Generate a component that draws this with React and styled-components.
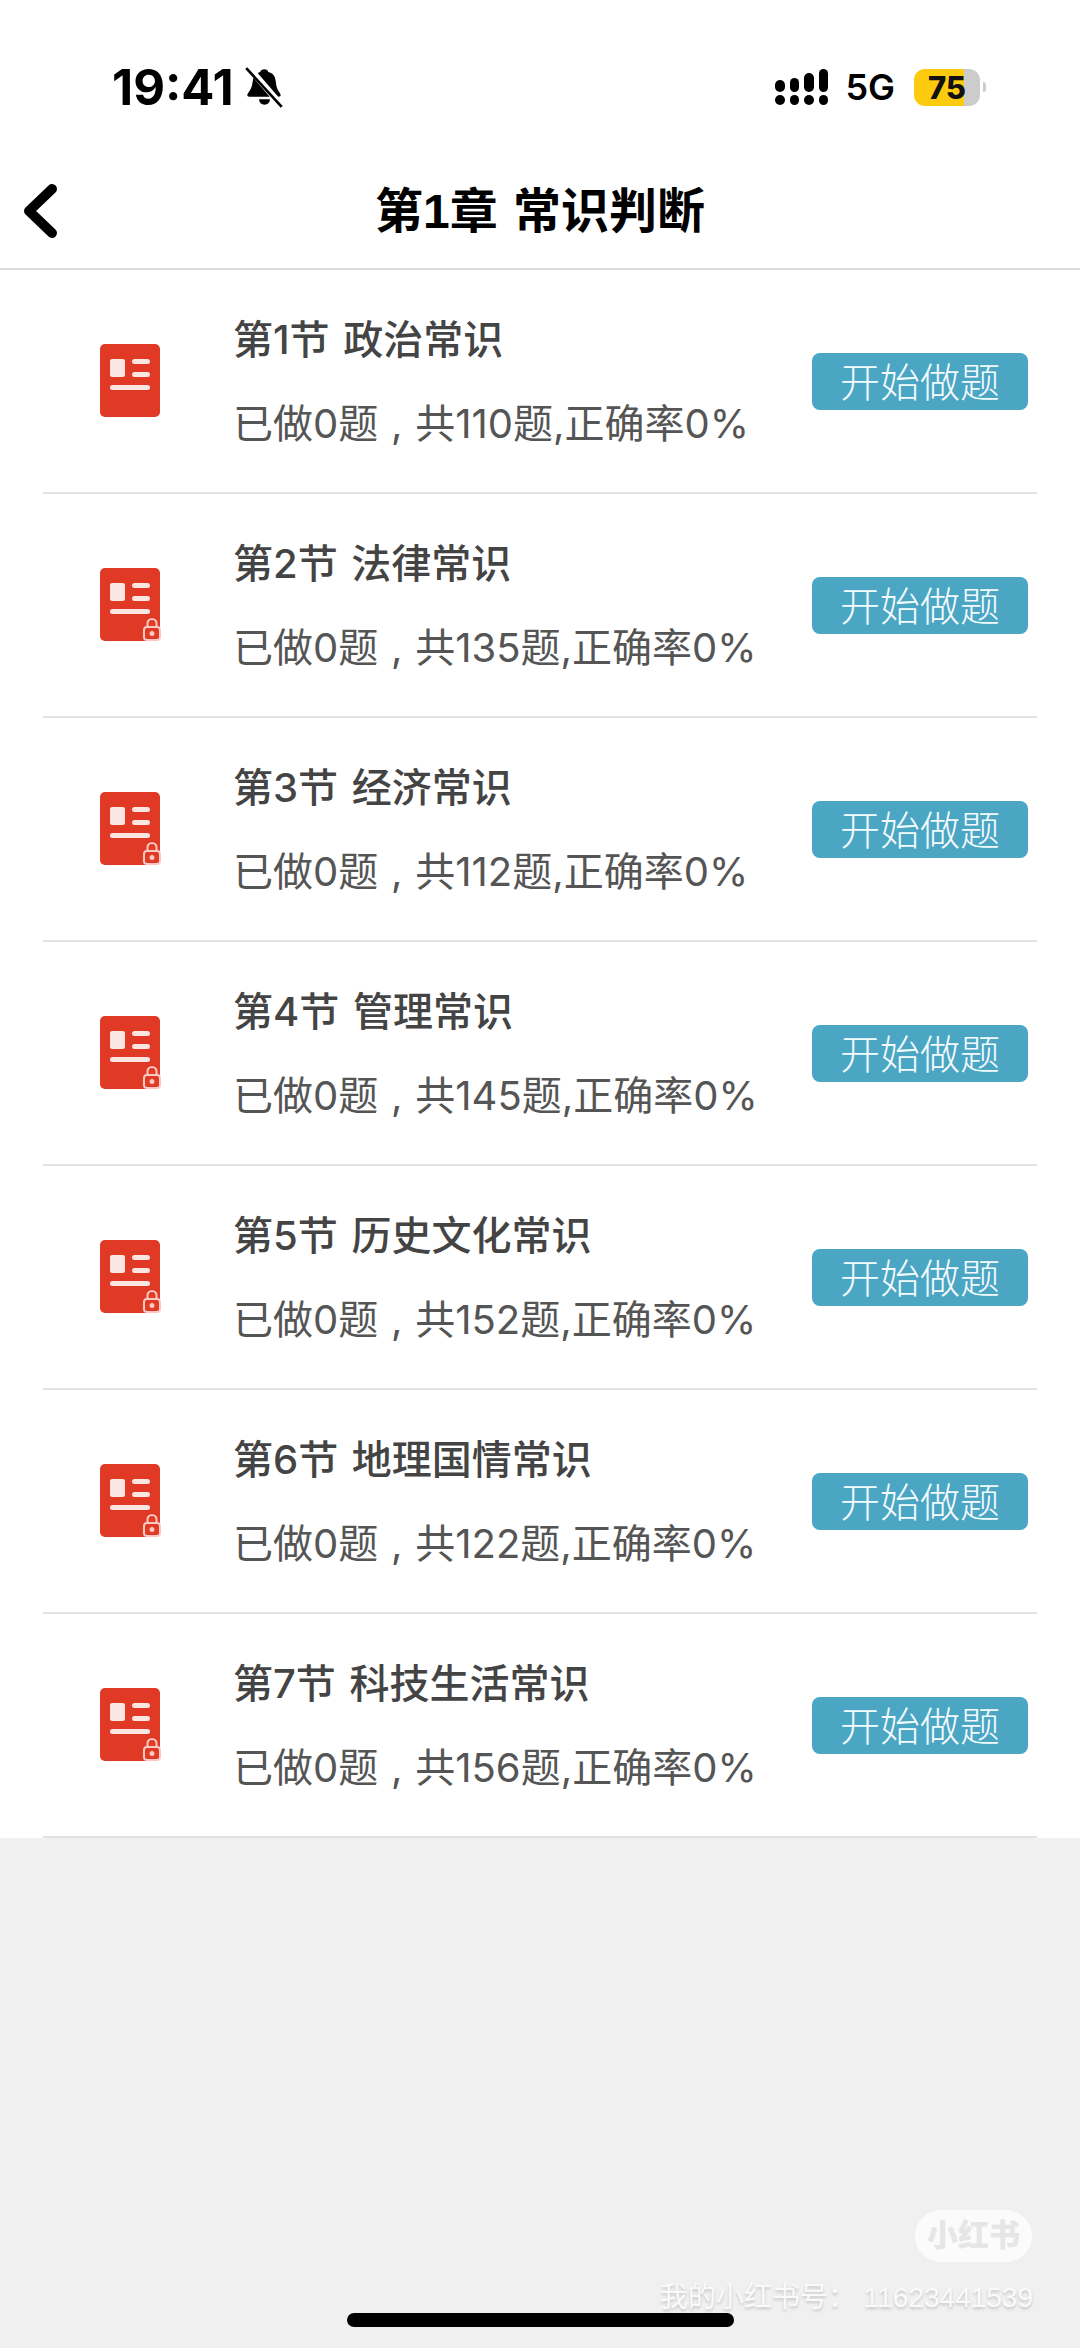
import React from 'react';
import styled, { createGlobalStyle } from 'styled-components';

const sections = [
    { title: '第1节 政治常识', total: 110, locked: false },
    { title: '第2节 法律常识', total: 135, locked: true },
    { title: '第3节 经济常识', total: 112, locked: true },
    { title: '第4节 管理常识', total: 145, locked: true },
    { title: '第5节 历史文化常识', total: 152, locked: true },
    { title: '第6节 地理国情常识', total: 122, locked: true },
    { title: '第7节 科技生活常识', total: 156, locked: true },
];

const signal = [12, 14, 19, 23];

const SectionIcon = ({ locked }) => (
    <IconSvg viewBox="0 0 62 76">
        <rect x="0" y="1" width="60" height="73" rx="5" fill="#e03a27" />
        <rect x="10" y="16" width="15" height="18" rx="2" fill="#fce6e2" />
        <rect x="32" y="16" width="18" height="5" rx="2.5" fill="#fce6e2" />
        <rect x="32" y="29" width="18" height="5" rx="2.5" fill="#fce6e2" />
        <rect x="10" y="42" width="40" height="5" rx="2.5" fill="#fce6e2" />
        {locked && (
            <g fill="none" stroke="#f8c9c0" strokeWidth="2">
                <rect x="44" y="60" width="16" height="13" rx="3" fill="#e03a27" />
                <path d="M47.5 60v-3.500a4.500 4.500 0 0 1 9 0V60" />
                <circle cx="52" cy="66.500" r="1.500" fill="#f8c9c0" />
            </g>
        )}
    </IconSvg>
);

export default function App() {
    return (
        <Page>
            <GlobalStyle />
            <StatusBar>
                <StatusLeft>
                    <Clock>19:41</Clock>
                    <svg width="39" height="43" viewBox="0 0 36 40">
                        <path d="M18 3c2 0 3 1 3.500 2.500 4.500 1 6.500 4 7 9 .4 5 1.500 8 4 11 1 1.500.5 3-1.500 3H4c-2 0-2.500-1.500-1.500-3 2.500-3 4-6 4.500-11 .5-5 3-8 7-9C14.500 4 16 3 18 3z" fill="#000" />
                        <path d="M13 31h10c0 3-2 5-5 5s-5-2-5-5z" fill="#000" />
                        <path d="M3 1l31 36" stroke="#fff" strokeWidth="6" />
                        <path d="M1 2l33 36" stroke="#000" strokeWidth="2.500" />
                    </svg>
                </StatusLeft>
                <StatusRight>
                    <Signal>
                        {signal.map((h, i) => (
                            <SignalColumn key={i}>
                                <SignalBar $height={h} />
                                <SignalDot />
                            </SignalColumn>
                        ))}
                    </Signal>
                    <Network>5G</Network>
                    <Battery>
                        <BatteryLevel>75</BatteryLevel>
                        <BatteryTip />
                    </Battery>
                </StatusRight>
            </StatusBar>
            <NavBar>
                <BackButton>
                    <svg width="36" height="56" viewBox="0 0 36 56">
                        <path d="M30 6L7 28l23 22" fill="none" stroke="#000" strokeWidth="10" strokeLinecap="round" strokeLinejoin="round" />
                    </svg>
                </BackButton>
                <NavTitle>第1章 常识判断</NavTitle>
            </NavBar>
            <List>
                {sections.map(s => (
                    <Row key={s.title}>
                        <IconCell><SectionIcon locked={s.locked} /></IconCell>
                        <Info>
                            <Title>{s.title}</Title>
                            <Progress>已做0题 , 共{s.total}题,正确率0%</Progress>
                        </Info>
                        <StartButton>开始做题</StartButton>
                    </Row>
                ))}
            </List>
            <RedNoteBadge>小红书</RedNoteBadge>
            <Watermark>我的小红书号： 11623441539</Watermark>
            <HomeIndicator />
        </Page>
    );
}

const GlobalStyle = createGlobalStyle`
    body {
        margin: 0;
        background: #f0f0f0;
        font-family: "Liberation Sans", "Noto Sans CJK SC", sans-serif;
    }
`;

const Page = styled.div`
    position: relative;
    width: 1080px;
    height: 2348px;
    overflow: hidden;
    background: #f0f0f0;
`;

const StatusBar = styled.div`
    height: 130px;
    box-sizing: border-box;
    padding: 44px 94px 0 112px;
    display: flex;
    align-items: center;
    justify-content: space-between;
    background: #fff;
`;

const StatusLeft = styled.div`
    display: flex;
    align-items: center;
    gap: 11px;
`;

const Clock = styled.span`
    font-family: Inter, sans-serif;
    font-size: 49px;
    font-weight: 700;
    color: #000;
`;

const StatusRight = styled.div`
    display: flex;
    align-items: center;
`;

const Signal = styled.div`
    display: flex;
    align-items: flex-end;
    gap: 5px;
    height: 36px;
`;

const SignalColumn = styled.div`
    display: flex;
    flex-direction: column;
    gap: 3px;
    width: 9.5px;
`;

const SignalBar = styled.div`
    height: ${p => p.$height}px;
    border-radius: 5px;
    background: #000;
`;

const SignalDot = styled.div`
    height: 10px;
    border-radius: 5px;
    background: #000;
`;

const Network = styled.span`
    margin-left: 17px;
    font-family: Inter, sans-serif;
    font-size: 36px;
    font-weight: 600;
    color: #000;
`;

const Battery = styled.div`
    margin-left: 19px;
    display: flex;
    align-items: center;
    gap: 3px;
`;

const BatteryLevel = styled.div`
    width: 66px;
    height: 37px;
    border-radius: 11px;
    background: linear-gradient(90deg, #fccb10 76%, #cccccc 76%);
    font-family: Inter, sans-serif;
    font-size: 31px;
    font-weight: 800;
    line-height: 37px;
    text-align: center;
    color: #111;
`;

const BatteryTip = styled.div`
    width: 3px;
    height: 10px;
    border-radius: 0 3px 3px 0;
    background: #ccc;
`;

const NavBar = styled.div`
    position: relative;
    height: 140px;
    display: flex;
    align-items: center;
    justify-content: center;
    background: #fff;
    border-bottom: 2px solid #dcdcdc;
    box-sizing: border-box;
`;

const BackButton = styled.div`
    position: absolute;
    left: 22px;
    top: 53px;
    height: 56px;
`;

const NavTitle = styled.div`
    font-size: 48px;
    font-weight: 700;
    color: #000;
    margin-top: 16px;
    word-spacing: 2px;
`;

const List = styled.div`
    background: #fff;
    padding: 0 43px;
`;

const Row = styled.div`
    height: 224px;
    box-sizing: border-box;
    border-bottom: 2px solid #e2e2e2;
    display: flex;
    align-items: center;
`;

const IconCell = styled.div`
    width: 190px;
    padding-left: 57px;
    box-sizing: border-box;
    display: flex;
`;

const IconSvg = styled.svg`
    width: 62px;
    height: 76px;
`;

const Info = styled.div`
    flex: 1;
    display: flex;
    flex-direction: column;
    gap: 32px;
    margin-top: 1px;
`;

const Title = styled.div`
    font-family: Inter, "Noto Sans CJK SC", sans-serif;
    font-size: 40px;
    font-weight: 500;
    line-height: 52px;
    word-spacing: 3px;
    color: #444;
`;

const Progress = styled.div`
    font-family: Inter, "Noto Sans CJK SC", sans-serif;
    font-size: 40px;
    line-height: 52px;
    word-spacing: 1.5px;
    color: #555;
`;

const StartButton = styled.div`
    width: 216px;
    height: 57px;
    margin-right: 9px;
    border-radius: 8px;
    background: #4ba6c4;
    color: #f4fbfd;
    font-family: "Noto Sans CJK SC", sans-serif;
    font-size: 40px;
    font-weight: 300;
    line-height: 54px;
    text-align: center;
`;

const RedNoteBadge = styled.div`
    position: absolute;
    left: 915px;
    top: 2210px;
    width: 117px;
    height: 52px;
    border-radius: 26px;
    background: #fbfbfb;
    color: #e6e6e6;
    font-size: 31px;
    font-weight: 900;
    line-height: 52px;
    text-align: center;
`;

const Watermark = styled.div`
    position: absolute;
    left: 660px;
    top: 2281px;
    font-size: 28px;
    line-height: 34px;
    white-space: nowrap;
    color: #fafafa;
    text-shadow: 0 2px 3px rgba(0, 0, 0, 0.18);
`;

const HomeIndicator = styled.div`
    position: absolute;
    left: 347px;
    top: 2313px;
    width: 387px;
    height: 14px;
    border-radius: 7px;
    background: #000;
`;
